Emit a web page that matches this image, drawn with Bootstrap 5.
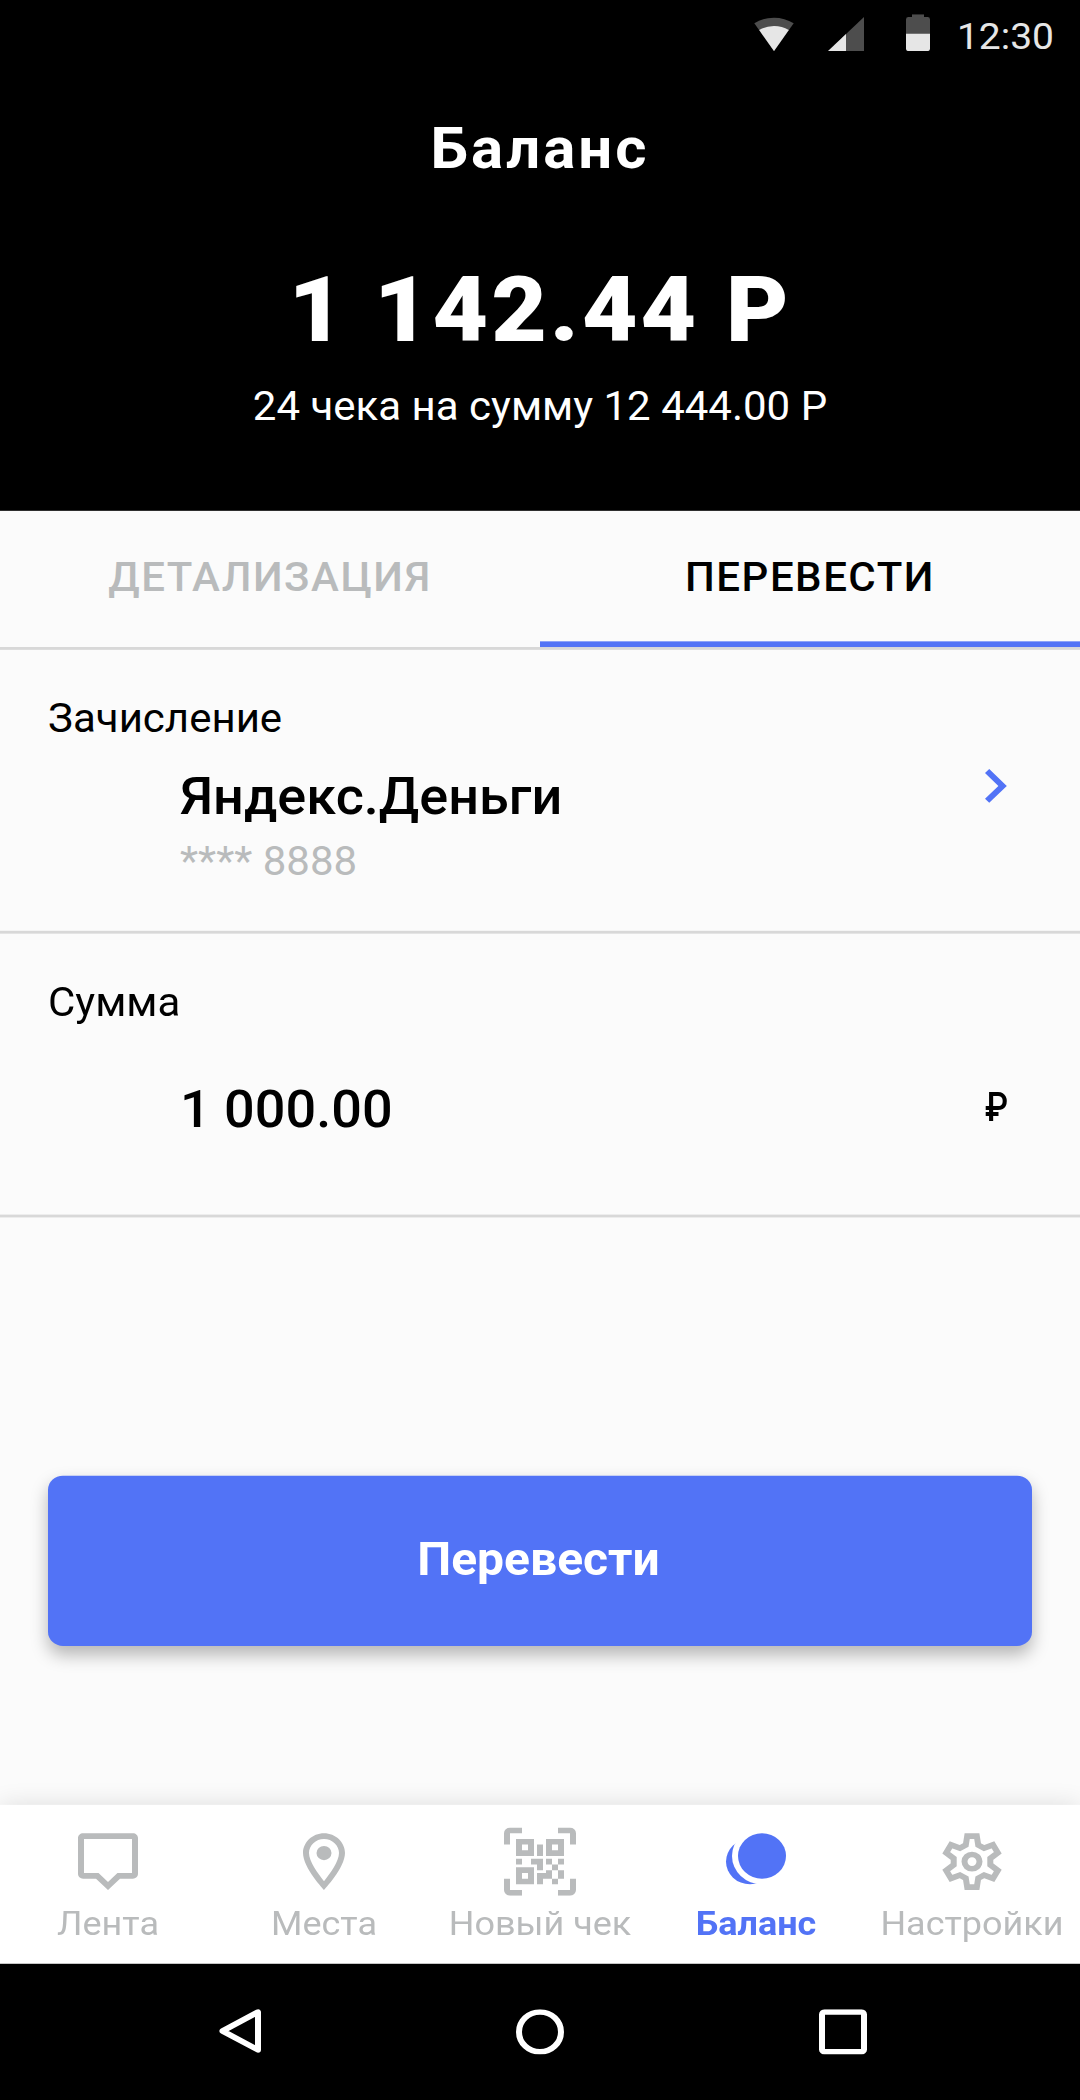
<!DOCTYPE html>
<html lang="ru">
<head>
<meta charset="utf-8">
<meta name="viewport" content="width=device-width, initial-scale=1">
<title>Баланс</title>
<link href="https://cdn.jsdelivr.net/npm/bootstrap@5.3.0/dist/css/bootstrap.min.css" rel="stylesheet">
<style>
  :root { --accent: #5273f6; --muted: #b9bbbc; --rule: #d8d8d8; }
  body { font-family: Roboto, "Noto Sans", sans-serif; background: #000; color: #000; font-size: 42px; line-height: 60px; }
  svg { display: block; flex: none; }
  .viewport { width: 1080px; height: 2100px; }
  .screen { width: 1080px; height: 2220px; background: #fbfbfb; transform: scaleY(.945946); transform-origin: 0 0; }
  .app-head { height: 540px; background: #000; color: #fff; }
  .status { height: 72px; padding: 15px 26px 0 0; color: #e6e6e6; }
  .status .clock { font-size: 39px; line-height: 49px; margin-left: 27px; }
  .status .drop { margin-top: 3px; }
  .signal { margin-left: 34px; }
  .battery { margin-left: 42px; }
  .head-title { font-size: 60px; font-weight: 700; letter-spacing: 3px; line-height: 172px; margin: 0; }
  .head-sum { font-size: 96px; font-weight: 900; letter-spacing: 3px; line-height: 112px; margin-top: 27px; }
  .head-note { margin-top: 17px; }
  .switch { height: 147px; border-bottom: 3px solid var(--rule); }
  .switch .nav-link { height: 144px; padding: 0; font-size: 42px; font-weight: 500; letter-spacing: 1.5px; line-height: 141px; color: var(--muted); border-bottom: 6px solid transparent; border-radius: 0; }
  .switch .nav-link.active { color: #000; border-bottom-color: var(--accent); }
  .field { height: 300px; padding: 43px 0 0 48px; border-bottom: 3px solid var(--rule); }
  .field-main { padding-left: 132px; }
  .field-value { font-size: 54px; font-weight: 500; line-height: 72px; }
  .field-side { width: 168px; }
  .payee { padding-top: 17px; }
  .payee-number { padding-top: 2px; color: var(--muted); }
  .payee-arrow { padding-top: 23px; }
  .amount { padding-top: 47px; }
  .rub { display: inline-block; font-weight: 500; transform: scaleX(.8); }
  .btn-send { height: 180px; margin: 273px 48px 0; border: 0; border-radius: 15px; background: var(--accent); color: #fff; font-size: 48px; font-weight: 700; line-height: 60px; padding: 0 3px 2px 0; box-shadow: 0 9px 18px rgba(0,0,0,.28); }
  .btn-send:hover { background: var(--accent); color: #fff; }
  .tabbar { height: 168px; background: #fff; box-shadow: 0 0 24px rgba(0,0,0,.12); }
  .tabbar a { width: 216px; padding-top: 24px; font-size: 36px; line-height: 42px; color: var(--muted); gap: 9px; white-space: nowrap; }
  .tabbar a.current { color: var(--accent); font-weight: 700; }
  .sysnav { height: 144px; background: #000; padding: 0 213px 0 219px; }
</style>
</head>
<body>
<div class="viewport overflow-hidden">
<div class="screen d-flex flex-column">

  <header class="app-head text-center">
    <div class="status d-flex justify-content-end align-items-start">
      <svg class="drop" width="40" height="36" viewBox="0 0 40 36"><path fill="#4d4d4d" d="M20 36 .3 6.6A35.7 35.7 0 0 1 39.7 6.6z"/><path fill="#e6e6e6" d="M20 36 5.2 13.8A27 27 0 0 1 34.8 13.8z"/></svg>
      <svg class="drop signal" width="36" height="36" viewBox="0 0 36 36"><path fill="#4d4d4d" d="M0 36 36 0v36z"/><path fill="#e6e6e6" d="M0 36 18 18v18z"/></svg>
      <svg class="battery" width="24" height="39" viewBox="0 0 24 39"><path fill="#4d4d4d" d="M6 0h12v3h3.500a2.500 2.500 0 0 1 2.500 2.500V21H0V5.500A2.500 2.500 0 0 1 2.500 3H6z"/><path fill="#e6e6e6" d="M0 20.600h24V36.500a2.500 2.500 0 0 1-2.500 2.500h-19A2.500 2.500 0 0 1 0 36.500z"/></svg>
      <span class="clock">12:30</span>
    </div>
    <h1 class="head-title">Баланс</h1>
    <div class="head-sum">1 142.44 Р</div>
    <div class="head-note">24 чека на сумму 12 444.00 Р</div>
  </header>

  <nav class="switch nav nav-justified flex-nowrap">
    <a class="nav-link w-50" href="#">ДЕТАЛИЗАЦИЯ</a>
    <a class="nav-link w-50 active" href="#">ПЕРЕВЕСТИ</a>
  </nav>

  <section class="field">
    <div>Зачисление</div>
    <div class="d-flex">
      <div class="field-main payee flex-grow-1">
        <div class="field-value">Яндекс.Деньги</div>
        <div class="payee-number">**** 8888</div>
      </div>
      <div class="field-side payee-arrow d-flex justify-content-center">
        <svg width="22" height="36" viewBox="0 0 22 36"><path d="M2.100 2.100 17.600 17.800 2.100 33.500" fill="none" stroke="#5273f6" stroke-width="6"/></svg>
      </div>
    </div>
  </section>

  <section class="field">
    <div>Сумма</div>
    <div class="amount d-flex">
      <div class="field-main field-value flex-grow-1">1 000.00</div>
      <div class="field-side text-center pt-1"><span class="rub">₽</span></div>
    </div>
  </section>

  <button type="button" class="btn btn-send">Перевести</button>

  <nav class="tabbar d-flex mt-auto">
    <a class="d-flex flex-column align-items-center text-decoration-none" href="#">
      <svg width="72" height="72" viewBox="0 0 24 24" fill="currentColor"><path fill-rule="evenodd" d="M3.700 2h16.600c.95 0 1.700.75 1.700 1.700v12.600c0 .95-.75 1.700-1.700 1.700H16l-4 4-4-4H3.700c-.95 0-1.700-.75-1.700-1.700V3.700C2 2.750 2.750 2 3.700 2zM4 4v12h4.850L12 19.150 15.150 16H20V4z"/></svg>
      <span>Лента</span>
    </a>
    <a class="d-flex flex-column align-items-center text-decoration-none" href="#">
      <svg width="72" height="72" viewBox="0 0 24 24" fill="currentColor"><path d="M12 2C8.130 2 5 5.130 5 9c0 5.250 7 13 7 13s7-7.750 7-13c0-3.870-3.130-7-7-7zM7 9c0-2.760 2.240-5 5-5s5 2.240 5 5c0 2.880-2.880 7.190-5 9.880C9.920 16.210 7 11.850 7 9z"/><circle cx="12" cy="9" r="2.500"/></svg>
      <span>Места</span>
    </a>
    <a class="d-flex flex-column align-items-center text-decoration-none" href="#">
      <svg width="72" height="72" viewBox="0 0 12 12" fill="currentColor">
        <path d="M0 3V1a1 1 0 0 1 1-1h2v1H1v2zM9 0h2a1 1 0 0 1 1 1v2h-1V1H9zM0 9h1v2h2v1H1a1 1 0 0 1-1-1zM11 9h1v2a1 1 0 0 1-1 1H9v-1h2z"/>
        <path fill-rule="evenodd" d="M2 2h3v3H2zM3 3v1h1V3zM7 2h3v3H7zM8 3v1h1V3zM2 7h3v3H2zM3 8v1h1V8z"/>
        <path d="M5.500 3h1v2h-1zM2 5.500h1v1H2zM4.500 5.500h2v2h-1v-1h-1zM7 5.500h1v1H7zM9 5.500h1v1H9zM8 6.500h1v1H8zM7 7.500h1V9H6.500v1h-1V8H7zM9 7.500h1V9H9zM8 9h1v1H8z"/>
      </svg>
      <span>Новый чек</span>
    </a>
    <a class="current d-flex flex-column align-items-center text-decoration-none" href="#">
      <svg width="72" height="72" viewBox="0 0 72 72" fill="currentColor"><mask id="crescent"><rect width="72" height="72" fill="#fff"/><circle cx="42" cy="30" r="30" fill="#000"/></mask><circle cx="30" cy="36" r="24" mask="url(#crescent)"/><circle cx="42" cy="30" r="24"/></svg>
      <span>Баланс</span>
    </a>
    <a class="d-flex flex-column align-items-center text-decoration-none" href="#">
      <svg width="72" height="72" viewBox="-36 -36 72 72" fill="none" stroke="currentColor" stroke-width="6"><path d="M-4.800-27H4.800L6.200-17.600 12.100-14.200 21-17.700 25.800-9.300 18.300-3.400V3.400L25.800 9.300 21 17.700 12.100 14.200 6.200 17.600 4.800 27H-4.800L-6.200 17.600-12.100 14.200-21 17.700-25.800 9.300-18.300 3.400V-3.400L-25.800-9.300-21-17.700-12.100-14.200-6.200-17.600z"/><circle r="7.500"/></svg>
      <span>Настройки</span>
    </a>
  </nav>

  <footer class="sysnav d-flex justify-content-between align-items-center">
    <svg width="42" height="48" viewBox="0 0 42 48" fill="none" stroke="#fff" stroke-width="6" stroke-linejoin="round"><path d="M3.500 23 39 3v40z"/></svg>
    <svg width="48" height="48" viewBox="0 0 48 48" fill="none" stroke="#fff" stroke-width="6"><circle cx="24" cy="24" r="21"/></svg>
    <svg width="48" height="48" viewBox="0 0 48 48" fill="none" stroke="#fff" stroke-width="6"><rect x="3" y="3" width="42" height="42" rx="2.500"/></svg>
  </footer>

</div>
</div>
<script src="https://cdn.jsdelivr.net/npm/bootstrap@5.3.0/dist/js/bootstrap.bundle.min.js"></script>
</body>
</html>
